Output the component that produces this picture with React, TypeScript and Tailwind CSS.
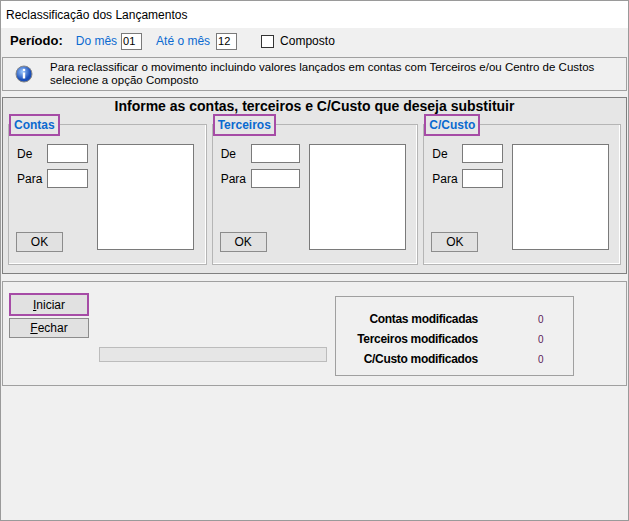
export default function App() {
  const f = { fontFamily: "'Liberation Sans', Arial, sans-serif" };
  const Group = ({ title, w, inW }: { title: string; w: number; inW: number }) => (
    <div className="relative mt-[26px] h-[141px] border border-[#b5b5b5] shadow-[inset_-1px_-1px_0_#fff]" style={{ width: w }}>
      <div className="absolute left-[2px] top-[-9px] bg-[#e6e6e6] px-[3px] py-[2px] text-[12px] font-bold leading-[14px] text-[#0a6ad0] outline-2 outline-[#a64ca6] outline">{title}</div>
      <div className="flex">
        <div className="ml-[8px] mt-[19px] flex flex-col gap-[6px]">
          {["De", "Para"].map((l) => (
            <div key={l} className="flex h-[19px] items-center">
              <span className="w-[30px] text-[12px] text-black">{l}</span>
              <div className="h-[19px] border border-[#7a7a7a] bg-white" style={{ width: inW }} />
            </div>
          ))}
        </div>
        <div className="mt-[19px] ml-[9px] h-[106px] w-[97px] border border-[#7a7a7a] bg-white" />
      </div>
      <button className="absolute left-[7px] top-[107px] h-[20px] w-[47px] border border-[#8c8c8c] bg-[#e1e1e1] text-[12px]">OK</button>
    </div>
  );
  return (
    <div style={f} className="h-[521px] w-[629px] overflow-hidden border border-[#9a9a9a] bg-[#f0f0f0] text-[12px] text-black">
      <div className="flex h-[27px] items-center bg-white pl-[5px] text-[12px]">Reclassificação dos Lançamentos</div>
      <div className="flex h-[26px] items-center pl-[9px]">
        <span className="font-bold text-[13px]">Período:</span>
        <span className="ml-[13px] text-[#0a6ad0]">Do mês</span>
        <div className="ml-[4px] flex h-[17px] w-[21px] items-center border border-[#7a7a7a] bg-white pl-[1px] font-['Liberation_Mono'] text-[11px]">01</div>
        <span className="ml-[14px] text-[#0a6ad0]">Até o mês</span>
        <div className="ml-[6px] flex h-[17px] w-[21px] items-center border border-[#7a7a7a] bg-white pl-[1px] font-['Liberation_Mono'] text-[11px]">12</div>
        <div className="ml-[24px] h-[13px] w-[13px] border border-[#333] bg-white" />
        <span className="ml-[6px]">Composto</span>
      </div>
      <div className="mx-[1px] mt-[3px] flex h-[34px] items-start border border-[#a0a0a0] pt-[3px]">
        <svg width="18" height="18" viewBox="0 0 18 18" className="ml-[12px] mt-[4px] shrink-0">
          <defs><radialGradient id="g" cx="40%" cy="35%"><stop offset="0" stopColor="#9cc8ff" /><stop offset="1" stopColor="#1b4fb8" /></radialGradient></defs>
          <circle cx="9" cy="9" r="8" fill="url(#g)" stroke="#888" />
          <rect x="7.8" y="7.5" width="2.4" height="6" fill="#fff" /><circle cx="9" cy="5" r="1.3" fill="#fff" />
        </svg>
        <div className="ml-[17px] w-[570px] text-[11.5px] leading-[13px]">Para reclassificar o movimento incluindo valores lançados em contas com Terceiros e/ou Centro de Custos selecione a opção Composto</div>
      </div>
      <div className="mx-[1px] mt-[6px] h-[177px] border border-[#808080] bg-[#e6e6e6] px-[5px]">
        <div className="text-center text-[14px] font-bold leading-[16px]">Informe as contas, terceiros e C/Custo que deseja substituir</div>
        <div className="-mt-[16px] flex gap-[5px]">
          <Group title="Contas" w={199} inW={41} />
          <Group title="Terceiros" w={207} inW={49} />
          <Group title="C/Custo" w={198} inW={41} />
        </div>
      </div>
      <div className="mx-[1px] mt-[7px] flex h-[105px] border border-[#a0a0a0]">
        <div className="ml-[6px] mt-[11px] flex flex-col gap-[2px]">
          <button className="h-[23px] w-[80px] border-2 border-[#a64ca6] bg-[#e1e1e1] text-[12px]"><u>I</u>niciar</button>
          <button className="h-[20px] w-[80px] border border-[#8c8c8c] bg-[#e1e1e1] text-[12px]"><u>F</u>echar</button>
        </div>
        <div className="ml-[10px] mt-[65px] h-[15px] w-[228px] border border-[#bcbcbc] bg-[#e6e6e6]" />
        <div className="ml-[8px] mt-[14px] h-[80px] w-[239px] border border-[#a0a0a0] pt-[12px] text-[12px] font-bold">
          {["Contas modificadas", "Terceiros modificados", "C/Custo modificados"].map((t) => (
            <div key={t} className="flex h-[20px] items-center">
              <span className="w-[142px] whitespace-nowrap text-right tracking-[-0.3px]">{t}</span>
              <span className="ml-[60px] text-[10px] font-normal text-[#5a1a5a]">0</span>
            </div>
          ))}
        </div>
      </div>
    </div>
  );
}
